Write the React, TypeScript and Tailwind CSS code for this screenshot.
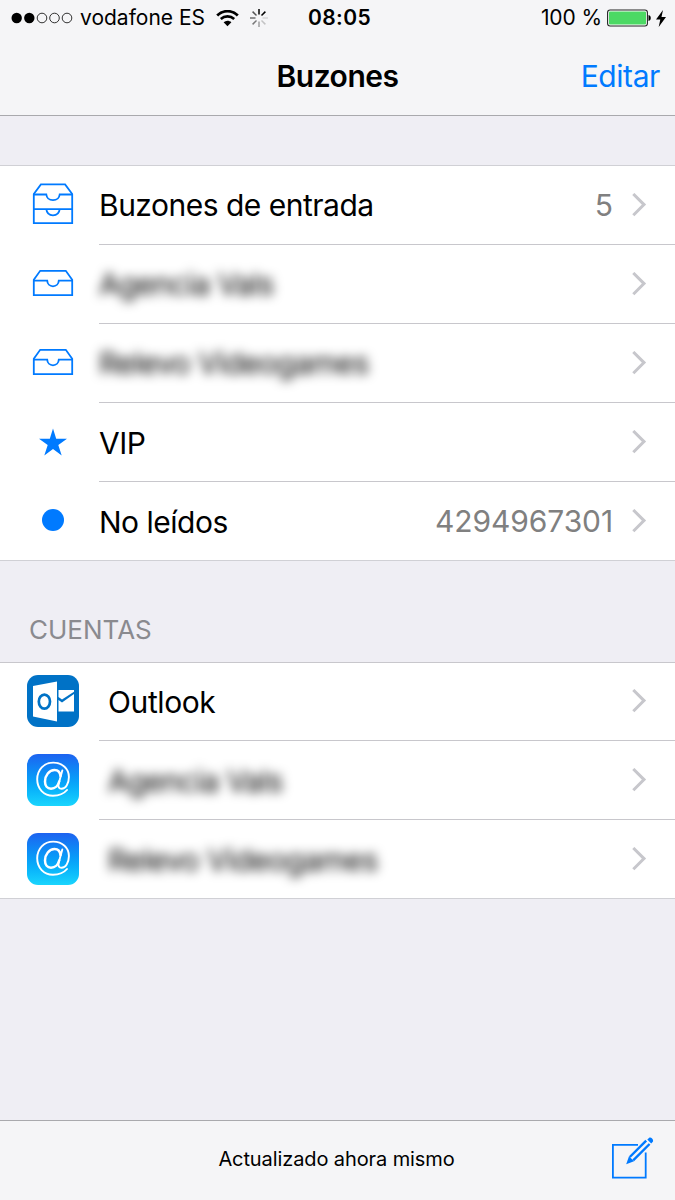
import type { ReactNode } from "react";

function TrayIcon() {
  return (
    <svg className="mb-[3px]" width="42" height="28" viewBox="0 0 42 28" fill="none" stroke="#007aff" strokeWidth="1.8">
      <path d="M1.8 10.8 8.2 1.8H33.8L40.2 10.8V26.2H1.8Z" />
      <path d="M1.8 11.6H15.2C15.4 15 17.8 17.3 21 17.3S26.600 15 26.800 11.600H40.200" />
    </svg>
  );
}

function TraysIcon() {
  return (
    <svg className="mb-[2px]" width="42" height="42" viewBox="0 0 42 42" fill="none" stroke="#007aff" strokeWidth="1.8">
      <path d="M1.800 11 8.900 1.400H33.100L40.200 11V40.200H1.800Z" />
      <path d="M1.800 11.500H14.300C14.800 15.100 17.500 17.200 21 17.200S27.200 15.100 27.700 11.500H40.200M1.800 26.100H40.200M14.300 26.100C14.800 30.300 17.500 32.300 21 32.300S27.200 30.300 27.700 26.100" />
    </svg>
  );
}

function StarIcon() {
  return (
    <svg width="28" height="28" viewBox="0 0 28 28" fill="#007aff">
      <path d="M14 .4 17.200 10.700H28L19.300 17.100 22.700 27.600 14 21.100 5.300 27.600 8.700 17.100 0 10.700H10.800Z" />
    </svg>
  );
}

function OutlookIcon() {
  return (
    <svg className="mb-px" width="52" height="52" viewBox="0 0 52 52">
      <rect width="52" height="52" rx="11" fill="#0072c6" />
      <path d="M6 11 30 6.500V46.500L6 41.500Z" fill="#fff" />
      <ellipse cx="17.400" cy="26.600" rx="5.600" ry="7" fill="none" stroke="#0072c6" strokeWidth="2.700" />
      <path d="M31.500 15H47V16.700L35 24.500 31.500 22Z" fill="#fff" />
      <path d="M31.500 25 35 27.500 47 19V36.500H31.500Z" fill="#fff" />
    </svg>
  );
}

function AtIcon() {
  return (
    <div className="flex size-[52px] items-center justify-center rounded-[11px] bg-linear-to-b from-[#1d62f0] to-[#1ad5fd]">
      <svg className="mb-[2px]" width="34" height="36" viewBox="0 0 34 36" fill="none" stroke="#fff" strokeLinecap="round">
        <path d="M31 29C27.600 33 22.800 34.800 17 34.800 7.800 34.800 1.200 27.800 1.200 18.300 1.200 8.700 8 1.600 17.200 1.600 26.400 1.600 32.900 7.700 32.900 16 32.900 22.700 29.500 27.800 25.600 27.800 22.900 27.800 22 25.800 22.600 23L26.300 9.500" strokeWidth="1.900" />
        <path d="M24.500 15C24 11 21.800 9.100 18.600 9.100 13.200 9.100 9 14.500 9 20.500 9 25 11.400 27.700 15 27.700 19 27.700 22.200 24.500 23.200 20.500" strokeWidth="2.500" />
      </svg>
    </div>
  );
}

function Chevron() {
  return (
    <svg className="mr-7 mb-px ml-[18px] shrink-0" width="16" height="24" viewBox="0 0 16 24" fill="none" stroke="#c7c7cc" strokeWidth="3">
      <path d="M2.300 1 13 11.600 2.300 22.200" />
    </svg>
  );
}

type RowProps = {
  icon: ReactNode;
  label: string;
  labelClass?: string;
  count?: string;
  height?: string;
  last?: boolean;
};

function Row({ icon, label, labelClass = "pt-[2px] tracking-[-0.5px]", count, height = "h-[79px]", last = false }: RowProps) {
  return (
    <li className={`flex ${height} ${last ? "border-b border-[#d0d0d5]" : ""}`}>
      <div className="flex w-[99px] shrink-0 items-center pb-px pl-[27px]">
        <div className="flex w-[52px] justify-center">{icon}</div>
      </div>
      <div className={`flex min-w-0 flex-1 items-center ${last ? "" : "border-b border-[#c8c7cc]"}`}>
        <span className={`flex-1 text-[30px] leading-9 whitespace-nowrap ${labelClass}`}>{label}</span>
        {count && <span className="text-[30px] leading-9 tracking-[-0.1px] text-[#808080]">{count}</span>}
        <Chevron />
      </div>
    </li>
  );
}

function StatusBar() {
  return (
    <div className="flex h-9 items-center text-[20px] leading-6">
      <div className="flex w-[308px] items-center pl-[11px]">
        <svg width="62" height="12" viewBox="0 0 62 12" fill="none" stroke="#000">
          <circle cx="5.700" cy="6" r="5.200" fill="#000" stroke="none" />
          <circle cx="18.300" cy="6" r="5.200" fill="#000" stroke="none" />
          <circle cx="31" cy="6" r="4.800" strokeWidth=".8" />
          <circle cx="43.500" cy="6" r="4.800" strokeWidth=".8" />
          <circle cx="56" cy="6" r="4.800" strokeWidth=".8" />
        </svg>
        <span className="ml-[7px] w-[130px] text-[21px] tracking-[0px] whitespace-nowrap">vodafone ES</span>
        <svg className="ml-[6px]" width="23" height="17" viewBox="0 0 23 17" fill="none" stroke="#000">
          <path d="M1.200 5.400C7 -.2 16 -.2 21.800 5.400" strokeWidth="2.800" />
          <path d="M4.800 9C8.600 5.500 14.400 5.500 18.200 9" strokeWidth="2.600" />
          <path d="M7.600 12.300C10 10.300 13 10.300 15.400 12.300L11.500 16.200Z" fill="#000" stroke="none" />
        </svg>
        <svg className="ml-[11px]" width="18" height="18" viewBox="0 0 18 18" stroke="#000" strokeWidth="1.500">
          <path d="M9 0V5.500" />
          <path d="M11.500 6.500 15.400 2.600" />
          <path d="M12.500 9H18" opacity=".12" />
          <path d="M11.500 11.500 15.400 15.400" opacity=".2" />
          <path d="M9 12.500V18" opacity=".35" />
          <path d="M6.500 11.500 2.600 15.400" opacity=".5" />
          <path d="M5.500 9H0" opacity=".55" />
          <path d="M6.500 6.500 2.600 2.600" opacity=".65" />
        </svg>
      </div>
      <span className="text-[21px] font-semibold tracking-[0.4px]">08:05</span>
      <div className="ml-auto flex items-center pr-[9px]">
        <span className="mr-[5px] text-[21px] tracking-[-0.1px] whitespace-nowrap">100 %</span>
        <svg width="44" height="18" viewBox="0 0 44 18">
          <rect x=".6" y="1" width="39.800" height="16" rx="2.500" fill="#fff" stroke="#222" strokeWidth="1.100" />
          <rect x="2" y="2.400" width="37" height="13.200" rx="1" fill="#4cd964" />
          <path d="M41.500 6C44.500 6.500 44.500 11.500 41.500 12Z" />
        </svg>
        <svg className="ml-[5px]" width="10" height="17" viewBox="0 0 10 17">
          <path d="M7 0 0 9.500H4.300L2.700 17 10 7H5.500Z" />
        </svg>
      </div>
    </div>
  );
}

export default function App() {
  return (
    <div className="flex h-[1200px] w-[675px] flex-col overflow-hidden bg-[#efeef4] font-['Inter','Liberation_Sans',sans-serif] text-black">
      <header className="h-[116px] shrink-0 border-b border-[#a9a9ad] bg-[#f5f5f7]">
        <StatusBar />
        <div className="grid h-[79px] grid-cols-[1fr_auto_1fr] items-center pr-[15px]">
          <h1 className="col-start-2 pl-[15px] text-[30px] leading-9 font-semibold tracking-[-0.5px]">Buzones</h1>
          <button className="justify-self-end text-[30px] leading-9 tracking-[-0.4px] text-[#007aff]">Editar</button>
        </div>
      </header>

      <main className="flex-1 pt-[49px]">
        <ul className="border-t border-[#d0d0d5] bg-white">
          <Row icon={<TraysIcon />} label="Buzones de entrada" labelClass="tracking-[-0.5px]" count="5" />
          <Row icon={<TrayIcon />} label="Agencia Vals" labelClass="blur-[5.5px] tracking-[-0.7px]" />
          <Row icon={<TrayIcon />} label="Relevo Videogames" labelClass="blur-[5.5px] tracking-[-0.6px]" />
          <Row icon={<StarIcon />} label="VIP" />
          <Row icon={<div className="mb-[2px] size-[22px] rounded-full bg-[#007aff]" />} label="No leídos" count="4294967301" last />
        </ul>
        <h2 className="h-[101px] pt-[53px] pl-[29px] text-[26px] leading-8 text-[#8a8a8f]">CUENTAS</h2>
        <ul className="border-t border-[#c8c7cc] bg-white">
          <Row icon={<OutlookIcon />} label="Outlook" labelClass="pl-[9px] tracking-[-0.4px]" height="h-[78px]" />
          <Row icon={<AtIcon />} label="Agencia Vals" labelClass="pt-[2px] pl-[9px] blur-[5.5px] tracking-[-0.7px]" />
          <Row icon={<AtIcon />} label="Relevo Videogames" labelClass="pt-[2px] pl-[9px] blur-[5.5px] tracking-[-0.6px]" last />
        </ul>
      </main>

      <footer className="grid h-20 shrink-0 grid-cols-[1fr_auto_1fr] items-center border-t border-[#a9a9ad] bg-[#f5f5f7]">
        <span className="col-start-2 pr-[2px] pb-[3px] text-[20px] leading-6 tracking-[-0.1px]">Actualizado ahora mismo</span>
        <svg className="mr-[21px] mb-1.5 justify-self-end" width="42" height="42" viewBox="0 0 42 42" fill="none" stroke="#007aff">
          <path d="M26 7.800H.9V40.700H33.700V15.500" strokeWidth="1.800" />
          <path d="M15 26.500 17.500 19.500 34.500 2.500 39 7 22 24Z" fill="#f5f5f7" stroke="none" />
          <path d="M17.800 20 34.200 3.600M21.200 23.400 37.600 7" strokeWidth="2.400" />
          <path d="M14.200 27.300 17 19.300 19.500 21.800 22 24.300Z" fill="#007aff" stroke="none" />
          <path d="M35.300 2.600 37 1C38.800-.6 42.500 3 40.600 4.900L39.200 6.500Z" fill="#007aff" stroke="none" />
        </svg>
      </footer>
    </div>
  );
}
